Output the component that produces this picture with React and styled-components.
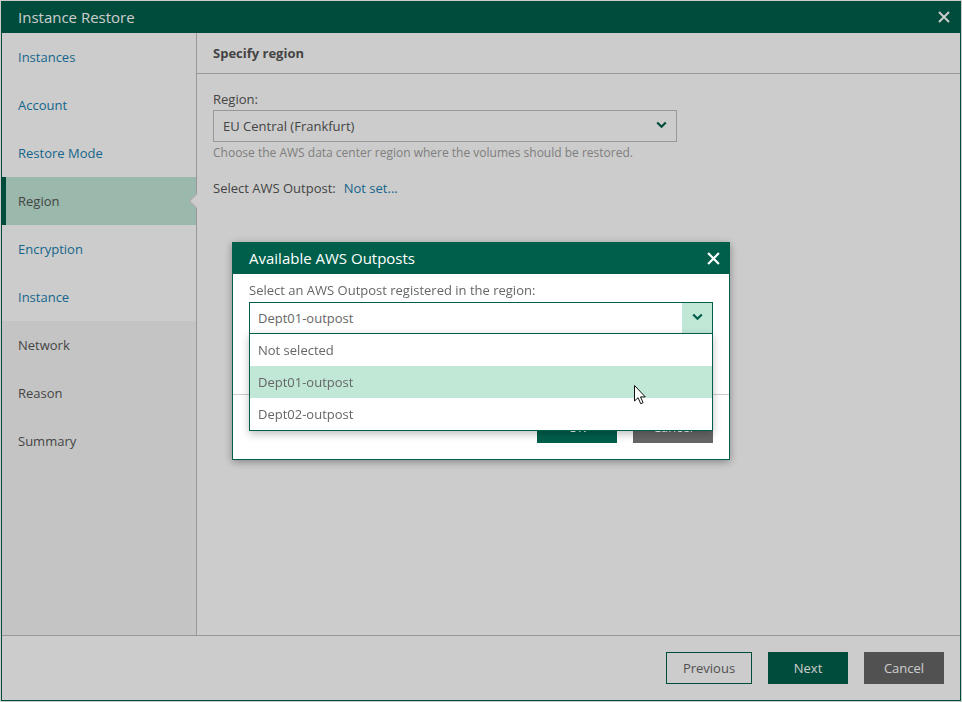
import React from "react";
import styled, { createGlobalStyle } from "styled-components";

const Global = createGlobalStyle`
  html, body { margin: 0; padding: 0; background: #fff; }
  body { font-family: "Open Sans", "Liberation Sans", sans-serif; font-size: 13px; color: #555; }
  * { box-sizing: border-box; }
`;

const Page = styled.div`
  width: 962px;
  height: 702px;
  padding: 1px;
`;

const Window = styled.div`
  width: 100%;
  height: 100%;
  display: flex;
  flex-direction: column;
  background: #fff;
  border: 1px solid #005f4b;
  border-top: 0;
`;

const TitleBar = styled.header`
  flex: 0 0 32px;
  display: flex;
  align-items: center;
  justify-content: space-between;
  background: #005f4b;
  color: #fff;
  font-size: 15px;
  padding: 0 11px 0 17px;
  margin: 0 -1px;
`;

const Body = styled.div`
  flex: 1;
  display: flex;
  min-height: 0;
`;

const Sidebar = styled.nav`
  flex: 0 0 195px;
  display: flex;
  flex-direction: column;
  background: #f5f5f5;
  border-right: 1px solid #bfbfbf;
`;

const Step = styled.div`
  position: relative;
  height: 48px;
  flex: none;
  display: flex;
  align-items: center;
  padding-left: ${p => (p.$active ? "12px" : "16px")};
  font-size: 13px;
  color: ${p => (p.$active ? "#555" : p.$done ? "#1a7fae" : "#555")};
  background: ${p => (p.$active ? "#c1e7d6" : p.$done ? "#fff" : "transparent")};
  border-left: ${p => (p.$active ? "4px solid #005f4b" : "0")};
`;

const Notch = styled.span`
  position: absolute;
  right: -5px;
  top: 19px;
  width: 10px;
  height: 10px;
  background: #fff;
  transform: rotate(45deg);
  border-left: 1px solid #d4d4d4;
  border-bottom: 1px solid #d4d4d4;
`;

const Main = styled.main`
  flex: 1;
  display: flex;
  flex-direction: column;
`;

const SectionHead = styled.div`
  height: 41px;
  flex: none;
  display: flex;
  align-items: center;
  padding: 0 16px 1px;
  font-weight: 700;
  font-size: 13px;
  color: #555;
  border-bottom: 1px solid #bfbfbf;
`;

const Form = styled.div`
  padding: 16px 16px 0;
`;

const FieldLabel = styled.div`
  font-size: 13px;
  line-height: 18px;
  margin-bottom: 2px;
`;

const Select = styled.div`
  width: 464px;
  height: 32px;
  display: flex;
  align-items: center;
  justify-content: space-between;
  padding: 0 9px;
  border: 1px solid #bfbfbf;
  background: #fff;
  font-size: 13px;
`;

const Hint = styled.div`
  font-size: 12px;
  line-height: 16px;
  margin-top: 3px;
  color: #a0a0a0;
`;

const OutpostRow = styled.div`
  margin-top: 18px;
  display: flex;
  gap: 8px;
  line-height: 18px;
  font-size: 13px;
`;

const Link = styled.span`
  color: #1a7fae;
`;

const Footer = styled.footer`
  flex: 0 0 65px;
  display: flex;
  justify-content: flex-end;
  align-items: flex-start;
  gap: 16px;
  padding: 16px 16px 0 0;
  border-top: 1px solid #bfbfbf;
`;

const Button = styled.button`
  width: ${p => p.$width || 80}px;
  height: 32px;
  font-family: inherit;
  font-size: 13px;
  padding: 0;
  border: ${p => (p.$kind === "outline" ? "1px solid #005f4b" : "0")};
  color: ${p => (p.$kind === "outline" ? "#666" : "#fff")};
  font-weight: ${p => (p.$kind === "primary" ? 500 : 400)};
  background: ${p =>
    p.$kind === "primary" ? "#005f4b" : p.$kind === "outline" ? "#fff" : "#666"};
`;

const Overlay = styled.div`
  position: fixed;
  inset: 0;
  width: 962px;
  height: 702px;
  background: rgba(0, 0, 0, 0.2);
  display: flex;
  align-items: center;
  justify-content: center;
`;

const Modal = styled.section`
  position: relative;
  width: 498px;
  height: 218px;
  display: flex;
  flex-direction: column;
  background: #fff;
  border: 1px solid #005f4b;
  box-shadow: 0 2px 8px rgba(0, 0, 0, 0.35);
`;

const ModalHead = styled.header`
  height: 31px;
  flex: none;
  display: flex;
  align-items: center;
  justify-content: space-between;
  padding: 0 9px 0 16px;
  background: #005f4b;
  color: #fff;
  font-size: 15px;
`;

const ModalTitle = styled.span`
  padding-bottom: 2px;
`;

const ModalBody = styled.div`
  flex: 1;
  padding: 7px 16px 0;
  color: #666;
`;

const Combo = styled.div`
  position: relative;
  margin-top: 3px;
  height: 32px;
  border: 1px solid #005f4b;
  background: #fff;
  display: flex;
  align-items: center;
  justify-content: space-between;
  padding-left: 8px;
  font-size: 13px;
`;

const ComboArrow = styled.span`
  width: 30px;
  align-self: stretch;
  background: #c1e7d6;
  display: flex;
  align-items: center;
  justify-content: center;
`;

const Menu = styled.ul`
  position: absolute;
  top: 30px;
  left: -1px;
  right: -1px;
  margin: 0;
  padding: 0;
  list-style: none;
  background: #fff;
  border: 1px solid #005f4b;
  box-shadow: 0 3px 8px rgba(0, 0, 0, 0.25);
  z-index: 2;
`;

const Option = styled.li`
  height: 32px;
  display: flex;
  align-items: center;
  padding-left: 8px;
  background: ${p => (p.$hover ? "#c1e7d6" : "transparent")};
`;

const ModalFooter = styled.footer`
  flex: 0 0 65px;
  display: flex;
  justify-content: flex-end;
  align-items: flex-start;
  gap: 16px;
  padding: 16px 16px 0 0;
  border-top: 1px solid #ccc;
`;

const Pointer = styled.svg`
  position: absolute;
  left: 400px;
  top: 141px;
  z-index: 3;
`;

const ChevronIcon = styled.svg`
  display: block;
  margin-bottom: 2px;
`;

const Close = ({ color = "#fff", size = 12 }) => (
  <svg width={size} height={size} viewBox="0 0 12 12">
    <path d="M1 1l10 10M11 1L1 11" stroke={color} strokeWidth="2" fill="none" />
  </svg>
);

const Chevron = () => (
  <ChevronIcon width="11" height="8" viewBox="0 0 11 8">
    <path d="M1.2 1.5l4.3 4.3 4.3-4.3" stroke="#005f4b" strokeWidth="2.2" fill="none" />
  </ChevronIcon>
);

const steps = [
  { name: "Instances", done: true },
  { name: "Account", done: true },
  { name: "Restore Mode", done: true },
  { name: "Region", active: true },
  { name: "Encryption", done: true },
  { name: "Instance", done: true },
  { name: "Network" },
  { name: "Reason" },
  { name: "Summary" },
];

export default function App() {
  return (
    <Page>
      <Global />
      <Window>
        <TitleBar>
          Instance Restore
          <Close />
        </TitleBar>
        <Body>
          <Sidebar>
            {steps.map(s => (
              <Step key={s.name} $active={s.active} $done={s.done}>
                {s.name}
                {s.active && <Notch />}
              </Step>
            ))}
          </Sidebar>
          <Main>
            <SectionHead>Specify region</SectionHead>
            <Form>
              <FieldLabel>Region:</FieldLabel>
              <Select>
                EU Central (Frankfurt)
                <Chevron />
              </Select>
              <Hint>Choose the AWS data center region where the volumes should be restored.</Hint>
              <OutpostRow>
                Select AWS Outpost: <Link>Not set...</Link>
              </OutpostRow>
            </Form>
          </Main>
        </Body>
        <Footer>
          <Button $kind="outline" $width={86}>Previous</Button>
          <Button $kind="primary">Next</Button>
          <Button>Cancel</Button>
        </Footer>
      </Window>
      <Overlay>
        <Modal>
          <ModalHead>
            <ModalTitle>Available AWS Outposts</ModalTitle>
            <Close size={13} />
          </ModalHead>
          <ModalBody>
            <FieldLabel>Select an AWS Outpost registered in the region:</FieldLabel>
            <Combo>
              Dept01-outpost
              <ComboArrow>
                <Chevron />
              </ComboArrow>
              <Menu>
                <Option>Not selected</Option>
                <Option $hover>Dept01-outpost</Option>
                <Option>Dept02-outpost</Option>
              </Menu>
            </Combo>
          </ModalBody>
          <ModalFooter>
            <Button $kind="primary">OK</Button>
            <Button>Cancel</Button>
          </ModalFooter>
          <Pointer width="14" height="22" viewBox="0 0 14 22">
            <path
              d="M1.5 1.5v15.5l3.6-3.3 2.6 6 2.4-1-2.6-5.8h4.8z"
              fill="#fff"
              stroke="#111"
              strokeWidth="1"
            />
          </Pointer>
        </Modal>
      </Overlay>
    </Page>
  );
}
